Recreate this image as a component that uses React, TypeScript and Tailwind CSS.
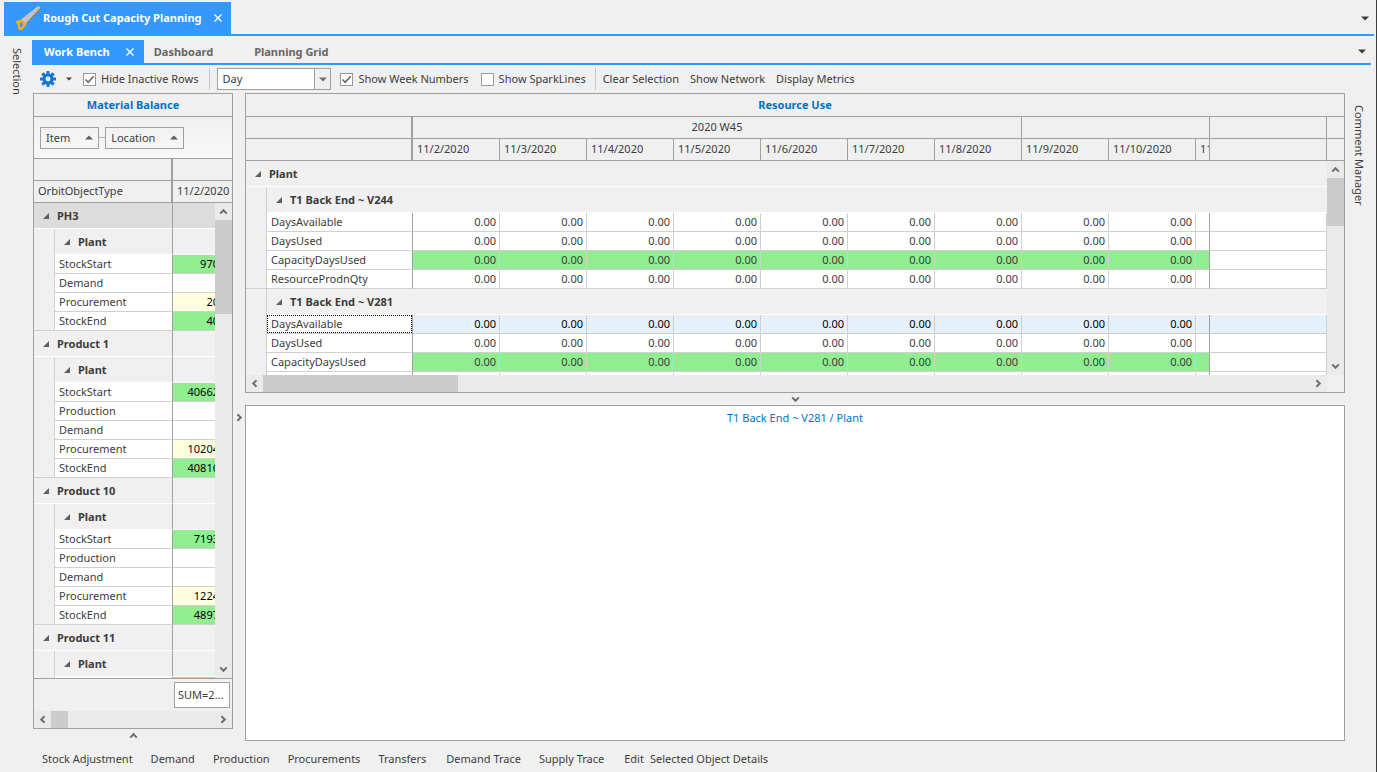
import type { ReactNode } from "react";

type Row = { label: string; value?: string; tone?: "green" | "yellow" };

const items: { name: string; active?: boolean; rows: Row[] }[] = [
  {
    name: "PH3",
    active: true,
    rows: [
      { label: "StockStart", value: "970", tone: "green" },
      { label: "Demand" },
      { label: "Procurement", value: "20", tone: "yellow" },
      { label: "StockEnd", value: "40", tone: "green" },
    ],
  },
  {
    name: "Product 1",
    rows: [
      { label: "StockStart", value: "40662", tone: "green" },
      { label: "Production" },
      { label: "Demand" },
      { label: "Procurement", value: "10204", tone: "yellow" },
      { label: "StockEnd", value: "40816", tone: "green" },
    ],
  },
  {
    name: "Product 10",
    rows: [
      { label: "StockStart", value: "7193", tone: "green" },
      { label: "Production" },
      { label: "Demand" },
      { label: "Procurement", value: "1224", tone: "yellow" },
      { label: "StockEnd", value: "4897", tone: "green" },
    ],
  },
  { name: "Product 11", rows: [{ label: "", tone: "green" }] },
];

const dates = [
  "11/2/2020",
  "11/3/2020",
  "11/4/2020",
  "11/5/2020",
  "11/6/2020",
  "11/7/2020",
  "11/8/2020",
  "11/9/2020",
  "11/10/2020",
];

const resources = [
  { name: "T1 Back End ~ V244", rows: ["DaysAvailable", "DaysUsed", "CapacityDaysUsed", "ResourceProdnQty"] },
  { name: "T1 Back End ~ V281", selected: "DaysAvailable", rows: ["DaysAvailable", "DaysUsed", "CapacityDaysUsed", ""] },
];

const actions = [
  ["Stock Adjustment", "Demand", "Production", "Procurements", "Transfers"],
  ["Demand Trace", "Supply Trace"],
];

const turns = { up: "", right: "rotate-90", down: "rotate-180", left: "-rotate-90" };

const Chevron = ({ dir }: { dir: keyof typeof turns }) => (
  <svg viewBox="0 0 9 9" className={`size-[9px] shrink-0 ${turns[dir]}`}>
    <path d="M1.2 6.6 4.5 3.2 7.8 6.6" fill="none" stroke="#6e6e6e" strokeWidth="2" />
  </svg>
);

const Caret = ({ className = "text-[#3c3c3c]" }: { className?: string }) => (
  <svg viewBox="0 0 8 5" className={`h-[5px] w-2 shrink-0 ${className}`}>
    <path d="M0 .5h8L4 4.5z" fill="currentColor" />
  </svg>
);

const CloseIcon = () => (
  <svg viewBox="0 0 8 8" className="size-2">
    <path d="M.5.5l7 7M7.5.5l-7 7" stroke="#fff" strokeWidth="1.4" />
  </svg>
);

const Expander = () => (
  <svg viewBox="0 0 6 6" className="size-[6px] shrink-0">
    <path d="M6 0v6H0z" fill="#5f5f5f" />
  </svg>
);

const SawIcon = () => (
  <svg viewBox="0 0 28 28" className="size-7 shrink-0">
    <path d="M23.5 2.6 7.3 15.2l4.8 5.6L26 6V2.6z" fill="#c3c3c3" />
    <path d="M26 5.2 12 20.3" fill="none" stroke="#6f6f6f" strokeWidth="1.6" strokeDasharray="1.4 .6" />
    <path
      d="M7.6 15.2 2.6 17c-.9.5-.9 1.5-.1 2 1.3.9 1.3 2 1.3 3.3 0 1.5.2 3.4 1.7 3.8 1.2.3 2.6-.3 3.7-1.3l3.4-4.2z"
      fill="#fbae17"
    />
    <path d="M5.9 19.3c.9-.8 2.3-1 3 0 .5 1.2-.2 3-1.5 4-1 .5-1.4-.2-1.4-1.3z" fill="#3399ff" />
  </svg>
);

const GearIcon = () => (
  <svg viewBox="0 0 16 16" className="size-4">
    <g fill="#1177d7">
      <circle cx="8" cy="8" r="5.6" />
      {[0, 45, 90, 135].map((angle) => (
        <rect key={angle} x="6.5" y="0" width="3" height="16" rx=".4" transform={`rotate(${angle} 8 8)`} />
      ))}
    </g>
    <circle cx="8" cy="8" r="2.4" fill="#f0f0f0" />
  </svg>
);

const CheckBox = ({ label, checked }: { label: string; checked?: boolean }) => (
  <label className="flex items-center gap-[5px]">
    <span className="relative flex">
      <input
        type="checkbox"
        defaultChecked={checked}
        className="peer size-[13px] appearance-none border border-[#9a9a9a] bg-white"
      />
      <svg viewBox="0 0 13 13" className="pointer-events-none absolute inset-0 hidden size-[13px] peer-checked:block">
        <path d="M2.5 6.5 5.2 9.3 10.7 3.3" fill="none" stroke="#666" strokeWidth="1.6" />
      </svg>
    </span>
    {label}
  </label>
);

const VScroll = ({ thumb }: { thumb: string }) => (
  <div className="absolute top-[44px] right-0 bottom-0 flex w-[17px] flex-col bg-[#eaeaea]">
    <button aria-label="Scroll up" className="flex h-[17px] items-center justify-center">
      <Chevron dir="up" />
    </button>
    <div className="flex-1">
      <div className={`bg-[#cbcbcb] ${thumb}`} />
    </div>
    <button aria-label="Scroll down" className="flex h-[17px] items-center justify-center">
      <Chevron dir="down" />
    </button>
  </div>
);

const HScroll = ({ thumb }: { thumb: string }) => (
  <div className="flex h-[17px] flex-1 bg-[#eaeaea]">
    <button aria-label="Scroll left" className="flex w-[17px] items-center justify-center">
      <Chevron dir="left" />
    </button>
    <div className="flex flex-1">
      <div className={`bg-[#cbcbcb] ${thumb}`} />
    </div>
    <button aria-label="Scroll right" className="flex w-[17px] items-center justify-center">
      <Chevron dir="right" />
    </button>
  </div>
);

const PanelTitle = ({ children }: { children: ReactNode }) => (
  <h2 className="flex h-[23px] shrink-0 items-center justify-center border-b border-[#a0a0a0] font-bold text-[#0072c6]">
    {children}
  </h2>
);

const GroupLabel = ({ children }: { children: ReactNode }) => (
  <span className="flex items-center gap-2 pl-[9px] font-bold">
    <Expander />
    {children}
  </span>
);

const SortButton = ({ children }: { children: ReactNode }) => (
  <button className="flex h-[22px] items-center gap-[15px] border border-[#a0a0a0] px-[5px]">
    {children}
    <Caret className="rotate-180 text-[#5f5f5f]" />
  </button>
);

const tones = { green: "bg-[#90ee90]", yellow: "bg-[#ffffe0]" };

function MaterialBalance() {
  return (
    <section className="flex min-h-0 flex-1 flex-col border border-[#a0a0a0]">
      <PanelTitle>Material Balance</PanelTitle>
      <div className="flex h-[42px] shrink-0 items-center border-b border-[#a0a0a0] bg-linear-to-b from-[#f0f0f0] to-[#f8f8f8] pl-[6px]">
        <SortButton>Item</SortButton>
        <span className="h-px w-[6px] bg-[#b4b4b4]" />
        <SortButton>Location</SortButton>
      </div>
      <div className="relative min-h-0 flex-1 overflow-hidden">
        <table className="w-full table-fixed border-separate border-spacing-0 text-left">
          <colgroup>
            <col className="w-[21px]" />
            <col className="w-[118px]" />
            <col />
          </colgroup>
          <thead>
            <tr className="h-[22px]">
              <td colSpan={2} className="border-r-2 border-b border-[#a0a0a0] p-0" />
              <td className="border-b border-[#a0a0a0] p-0" />
            </tr>
            <tr className="h-[22px]">
              <th colSpan={2} className="border-r-2 border-b border-[#a0a0a0] p-0 pb-[2px] pl-1 font-normal">
                OrbitObjectType
              </th>
              <th className="border-b border-[#a0a0a0] p-0 pb-[2px] pl-1 font-normal">11/2/2020</th>
            </tr>
          </thead>
          {items.map((item) => (
            <tbody key={item.name}>
              <tr className={item.active ? "h-[26px] bg-[#dcdcdc]" : "h-[26px]"}>
                <th colSpan={2} className="border-r border-b border-r-[#a0a0a0] border-b-white p-0">
                  <GroupLabel>{item.name}</GroupLabel>
                </th>
                <td className="border-b border-white p-0" />
              </tr>
              <tr className="h-[26px]">
                <td className="border-r border-[#d0d0d0] p-0" />
                <th className="border-r border-b border-r-[#a0a0a0] border-b-white p-0">
                  <GroupLabel>Plant</GroupLabel>
                </th>
                <td className="border-b border-white p-0" />
              </tr>
              {item.rows.map((row, i) => (
                <tr key={row.label} className="h-[19px]">
                  <td className={`border-r border-[#d0d0d0] p-0 ${i === item.rows.length - 1 ? "border-b" : ""}`} />
                  <th className="border-r border-b border-r-[#a0a0a0] border-b-[#d0d0d0] bg-white p-0 pl-1 font-normal">
                    {row.label}
                  </th>
                  <td
                    className={`border-b border-[#d0d0d0] p-0 pr-[13px] text-right text-black ${row.tone ? tones[row.tone] : "bg-white"}`}
                  >
                    {row.value}
                  </td>
                </tr>
              ))}
            </tbody>
          ))}
        </table>
        <VScroll thumb="h-[94px]" />
      </div>
      <div className="flex h-[33px] shrink-0 justify-end border-t border-[#a0a0a0] pt-[3px] pr-[2px]">
        <output className="flex h-[26px] w-[56px] items-center border border-[#a0a0a0] bg-white pl-[3px]">SUM=2...</output>
      </div>
      <div className="flex shrink-0">
        <HScroll thumb="w-[17px]" />
      </div>
    </section>
  );
}

function ResourceUse() {
  return (
    <section className="flex min-h-0 flex-[25] flex-col border border-[#a0a0a0]">
      <PanelTitle>Resource Use</PanelTitle>
      <div className="relative min-h-0 flex-1 overflow-hidden">
        <table className="w-full table-fixed border-separate border-spacing-0 text-left">
          <colgroup>
            <col className="w-[21px]" />
            <col className="w-[146px]" />
            {dates.map((date) => (
              <col key={date} className="w-[87px]" />
            ))}
            <col className="w-[14px]" />
            <col />
            <col className="w-[17px]" />
          </colgroup>
          <thead>
            <tr className="h-[22px]">
              <td colSpan={2} className="border-r-2 border-b border-[#a0a0a0] p-0" />
              <th colSpan={7} className="border-r border-b border-[#a0a0a0] p-0 pb-[2px] text-center font-normal">
                2020 W45
              </th>
              <td colSpan={3} className="border-r border-b border-[#a0a0a0] p-0" />
              <td className="border-r border-b border-[#a0a0a0] p-0" />
              <td className="border-b border-[#a0a0a0] p-0" />
            </tr>
            <tr className="h-[22px]">
              <td colSpan={2} className="border-r-2 border-b border-[#a0a0a0] p-0" />
              {dates.map((date) => (
                <th key={date} className="border-r border-b border-[#a0a0a0] p-0 pb-[2px] pl-1 font-normal">
                  {date}
                </th>
              ))}
              <th className="overflow-hidden border-r border-b border-[#a0a0a0] p-0 pb-[2px] pl-1 font-normal">11</th>
              <td className="border-r border-b border-[#a0a0a0] p-0" />
              <td className="border-b border-[#a0a0a0] p-0" />
            </tr>
          </thead>
          <tbody>
            <tr className="h-[26px]">
              <th colSpan={14} className="border-b border-white p-0">
                <GroupLabel>Plant</GroupLabel>
              </th>
            </tr>
          </tbody>
          {resources.map((resource) => (
            <tbody key={resource.name}>
              <tr className="h-[26px]">
                <td className="border-r border-[#d0d0d0] p-0" />
                <th colSpan={13} className="border-b border-white p-0">
                  <GroupLabel>{resource.name}</GroupLabel>
                </th>
              </tr>
              {resource.rows.map((label, i) => {
                const selected = label === resource.selected;
                const fill = selected ? "bg-[#e5f1fa]" : "bg-white";
                const dayFill = label === "CapacityDaysUsed" ? "bg-[#90ee90]" : fill;
                return (
                  <tr key={label} className="h-[19px]">
                    <td className={`border-r border-[#d0d0d0] p-0 ${i === resource.rows.length - 1 ? "border-b" : ""}`} />
                    <th className="border-r border-b border-r-[#a0a0a0] border-b-[#d0d0d0] bg-white p-0 font-normal">
                      <div
                        className={`h-[18px] pl-1 ${selected ? "outline-1 -outline-offset-1 outline-black outline-dotted" : ""}`}
                      >
                        {label}
                      </div>
                    </th>
                    {dates.map((date) => (
                      <td
                        key={date}
                        className={`border-r border-b border-[#d0d0d0] p-0 pr-[3px] text-right ${dayFill} ${selected ? "text-black" : ""}`}
                      >
                        {label && "0.00"}
                      </td>
                    ))}
                    <td className={`border-r border-b border-r-[#a0a0a0] border-b-[#d0d0d0] p-0 ${dayFill}`} />
                    <td className={`border-r border-b border-[#d0d0d0] p-0 ${fill}`} />
                    <td className="p-0" />
                  </tr>
                );
              })}
            </tbody>
          ))}
        </table>
        <VScroll thumb="h-12" />
      </div>
      <div className="flex shrink-0 pr-[17px]">
        <HScroll thumb="w-[195px]" />
      </div>
    </section>
  );
}

function Toolbar() {
  return (
    <div className="flex h-7 items-center pl-2">
      <button aria-label="Settings" className="flex items-center gap-[10px]">
        <GearIcon />
        <svg viewBox="0 0 6 4" className="h-1 w-[6px]">
          <path d="M0 .5h6L3 3.5z" fill="#3c3c3c" />
        </svg>
      </button>
      <div className="ml-[11px] flex">
        <CheckBox label="Hide Inactive Rows" checked />
      </div>
      <span className="mr-[7px] ml-[11px] h-[22px] w-px bg-[#c8c8c8]" />
      <div className="relative">
        <select
          aria-label="Time bucket"
          className="block h-[22px] w-[114px] appearance-none border border-[#a0a0a0] bg-white pl-1"
        >
          <option>Day</option>
        </select>
        <span className="pointer-events-none absolute inset-y-0 right-0 flex w-[17px] items-center justify-center border border-[#a0a0a0] bg-[#f0f0f0]">
          <Caret className="text-[#6e6e6e]" />
        </span>
      </div>
      <div className="ml-[9px] flex gap-3">
        <CheckBox label="Show Week Numbers" checked />
        <CheckBox label="Show SparkLines" />
      </div>
      <span className="mr-[7px] ml-[9px] h-[22px] w-px bg-[#c8c8c8]" />
      <div className="flex gap-[11px]">
        <button>Clear Selection</button>
        <button>Show Network</button>
        <button>Display Metrics</button>
      </div>
    </div>
  );
}

export default function App() {
  return (
    <div className="flex h-screen flex-col overflow-hidden border-r border-[#3c3c3c] bg-[#f0f0f0] font-['Noto_Sans','Open_Sans',sans-serif] text-[11px] leading-[18px] text-[#3c3c3c]">
      {/* Document tabs */}
      <header className="mt-[2px] mr-[2px] ml-1 flex h-[34px] shrink-0 items-stretch border-b-2 border-[#3399ff]">
        <div className="flex items-center bg-[#3399ff] pr-[9px] pl-[10px] font-bold text-white">
          <SawIcon />
          <h1 className="ml-px">Rough Cut Capacity Planning</h1>
          <button aria-label="Close Rough Cut Capacity Planning" className="ml-3">
            <CloseIcon />
          </button>
        </div>
        <button aria-label="Open windows" className="mr-[5px] ml-auto">
          <Caret />
        </button>
      </header>

      <div className="flex min-h-0 flex-1">
        <aside className="w-8 shrink-0 pt-3">
          <button className="ml-2 [writing-mode:vertical-rl]">Selection</button>
        </aside>

        <main className="flex min-w-0 flex-1 flex-col pt-1">
          <nav className="mr-[5px] flex h-[25px] shrink-0 border-b-2 border-[#3399ff] font-bold text-[#666]">
            <div className="flex items-center bg-[#3399ff] pr-[10px] pl-3 text-white">
              <button>Work Bench</button>
              <button aria-label="Close Work Bench" className="ml-4">
                <CloseIcon />
              </button>
            </div>
            <button className="ml-[10px]">Dashboard</button>
            <button className="ml-[41px]">Planning Grid</button>
            <button aria-label="More tabs" className="mr-[5px] ml-auto">
              <Caret />
            </button>
          </nav>
          <Toolbar />

          <div className="flex min-h-0 flex-1 pl-px">
            <div className="flex w-[200px] shrink-0 flex-col">
              <MaterialBalance />
              <button aria-label="Expand panel" className="flex h-3 items-center justify-center">
                <Chevron dir="up" />
              </button>
            </div>
            <button aria-label="Show left panel" className="flex w-3 items-center justify-center">
              <Chevron dir="right" />
            </button>
            <div className="flex min-w-0 flex-1 flex-col">
              <ResourceUse />
              <button aria-label="Collapse chart" className="flex h-3 items-center justify-center">
                <Chevron dir="down" />
              </button>
              <section className="min-h-0 flex-[28] border border-[#a0a0a0] bg-white text-center text-[#0072c6]">
                <h3 className="pt-[3px]">T1 Back End ~ V281 / Plant</h3>
              </section>
            </div>
            <aside className="w-[31px] pt-3">
              <button className="ml-[5px] [writing-mode:vertical-rl]">Comment Manager</button>
            </aside>
          </div>

          {/* Actions for the selected object */}
          <footer className="flex h-[31px] shrink-0 items-center gap-5 pt-[6px] pb-px pl-[10px]">
            {actions.map((group) => (
              <div key={group[0]} className="flex gap-[18px]">
                {group.map((action) => (
                  <button key={action}>{action}</button>
                ))}
              </div>
            ))}
            <div className="flex gap-[6px]">
              <button>Edit</button>
              <button>Selected Object Details</button>
            </div>
          </footer>
        </main>
      </div>
    </div>
  );
}
